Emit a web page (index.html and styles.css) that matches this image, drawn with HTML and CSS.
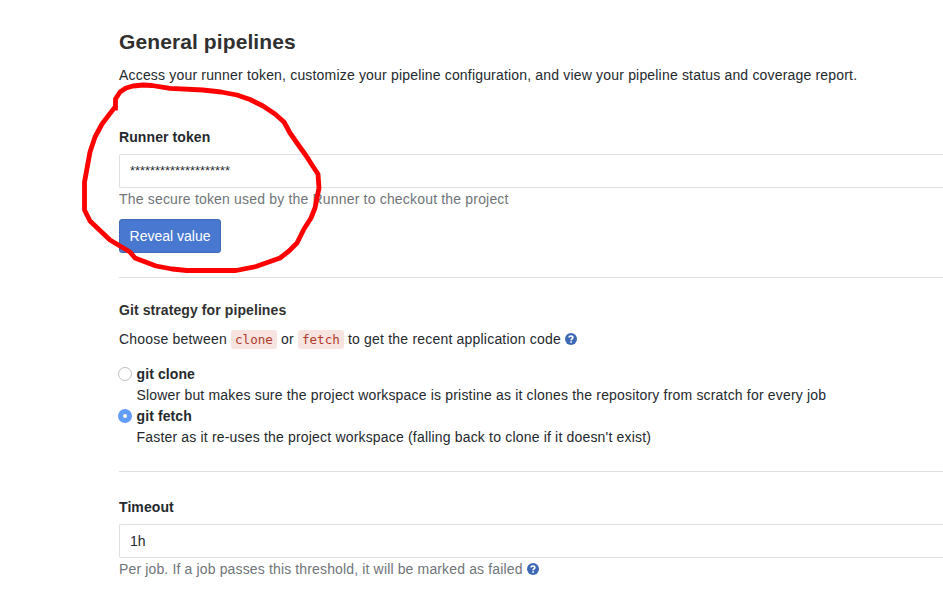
FILE: index.html
```html
<!DOCTYPE html>
<html lang="en">
<head>
<meta charset="utf-8">
<title>General pipelines</title>
<link rel="stylesheet" href="styles.css">
</head>
<body>
<main class="settings">
  <header class="settings-header">
    <h1>General pipelines</h1>
    <p>Access your runner token, customize your pipeline configuration, and view your pipeline status and coverage report.</p>
  </header>
  <section class="group token-group">
    <h2>Runner token</h2>
    <div class="field token">********************</div>
    <p class="help">The secure token used by the Runner to checkout the project</p>
    <button class="reveal" type="button">Reveal value</button>
  </section>
  <section class="group strategy-group">
    <h2>Git strategy for pipelines</h2>
    <p class="strategy">Choose between <code>clone</code> or <code>fetch</code> to get the recent application code <svg class="question" viewBox="0 0 12 12"><circle cx="6" cy="6" r="6"/><path d="M4 4.5C4.2 2.5 7.8 2.5 7.8 4.5C7.8 5.8 6.1 5.8 6.1 7.2M6.1 8.3V9.7"/></svg></p>
    <div class="option"><span class="radio"></span><div><b>git clone</b><p>Slower but makes sure the project workspace is pristine as it clones the repository from scratch for every job</p></div></div>
    <div class="option"><span class="radio checked"></span><div><b>git fetch</b><p>Faster as it re-uses the project workspace (falling back to clone if it doesn't exist)</p></div></div>
  </section>
  <section class="group timeout-group">
    <h2>Timeout</h2>
    <div class="field">1h</div>
    <p class="help timeout-help">Per job. If a job passes this threshold, it will be marked as failed <svg class="question" viewBox="0 0 12 12"><circle cx="6" cy="6" r="6"/><path d="M4 4.5C4.2 2.5 7.8 2.5 7.8 4.5C7.8 5.8 6.1 5.8 6.1 7.2M6.1 8.3V9.7"/></svg></p>
  </section>
</main>
<svg class="markup" viewBox="0 0 943 593"><path d="M115.500 108L115.500 99L120 92L126 88L133 86L143 85L152 85.500L170 88.300L203 90L221 92L237 95L250 99.500L263 106L275 114L284 122L290 133L297 143L307 157L312 165L318 174L319 188L315 208L311 218L304 229L297 243L289 251L280 258L256 266.500L236 270.500H187L172 269L156 266L135 258L130 252L110 240L90 221L84.500 210V182L90 152L95 137L102 124L115 107"/></svg>
</body>
</html>
```
FILE: styles.css
```css
* { box-sizing: border-box; }
body {
  margin: 0;
  height: 593px;
  overflow: hidden;
  background: #fff;
  color: #24292d;
  font: 14px/20px "Liberation Sans", Arial, sans-serif;
}
h1, h2, p { margin: 0; }
p { letter-spacing: 0.18px; }
.settings { padding: 29px 0 0 119px; white-space: nowrap; }
.settings-header { height: 98px; }
h1 { font-size: 21px; line-height: 26px; margin-bottom: 10px; color: #303030; letter-spacing: 0.1px; }
h2 { font-size: 14px; line-height: 20px; margin-bottom: 7px; letter-spacing: 0.09px; }
.group { border-bottom: 1px solid #dfdfdf; }
.token-group { height: 151px; }
.field {
  height: 34px;
  padding: 6px 10px;
  border: 1px solid #dfdfdf;
  border-right: 0;
  border-radius: 2px 0 0 2px;
}
.token { font-size: 12.85px; line-height: 19px; }
.help { color: #707579; margin-top: 1px; }
.reveal {
  display: block;
  width: 102px;
  height: 34px;
  margin-top: 10px;
  padding: 0;
  border: 1px solid #4069b8;
  border-radius: 3px;
  background: #4878d0;
  color: #fff;
  font: inherit;
}
.strategy-group { height: 194px; padding-top: 22px; }
.strategy-group h2 { margin-bottom: 9px; color: #303030; }
.strategy { margin-bottom: 15px; letter-spacing: 0.2px; }
code {
  display: inline-block;
  height: 19px;
  line-height: 19px;
  padding: 0 4px;
  border-radius: 3px;
  background: #f7e4e0;
  color: #b13b2b;
  font-family: "DejaVu Sans Mono", monospace;
  font-size: 12.6px;
  letter-spacing: 0;
}
.question { width: 12px; height: 12px; vertical-align: -1px; }
.question circle { fill: #3e69b5; }
.question path { fill: none; stroke: #fff; stroke-width: 1.7; }
.option { display: flex; gap: 4.5px; margin-left: -1px; line-height: 21px; }
.option b { letter-spacing: 0.1px; }
.radio { width: 14px; height: 14px; margin-top: 3px; border: 1px solid #bebebe; border-radius: 50%; }
.checked { border: 5px solid #629cf9; background: #fff; }
.timeout-group { padding-top: 25px; border: 0; }
.timeout-help { letter-spacing: 0.145px; }
.markup { position: absolute; left: 0; top: 0; width: 943px; height: 593px; pointer-events: none; }
.markup path { fill: none; stroke: #f00; stroke-width: 4.8; stroke-linejoin: round; stroke-linecap: square; }
```
